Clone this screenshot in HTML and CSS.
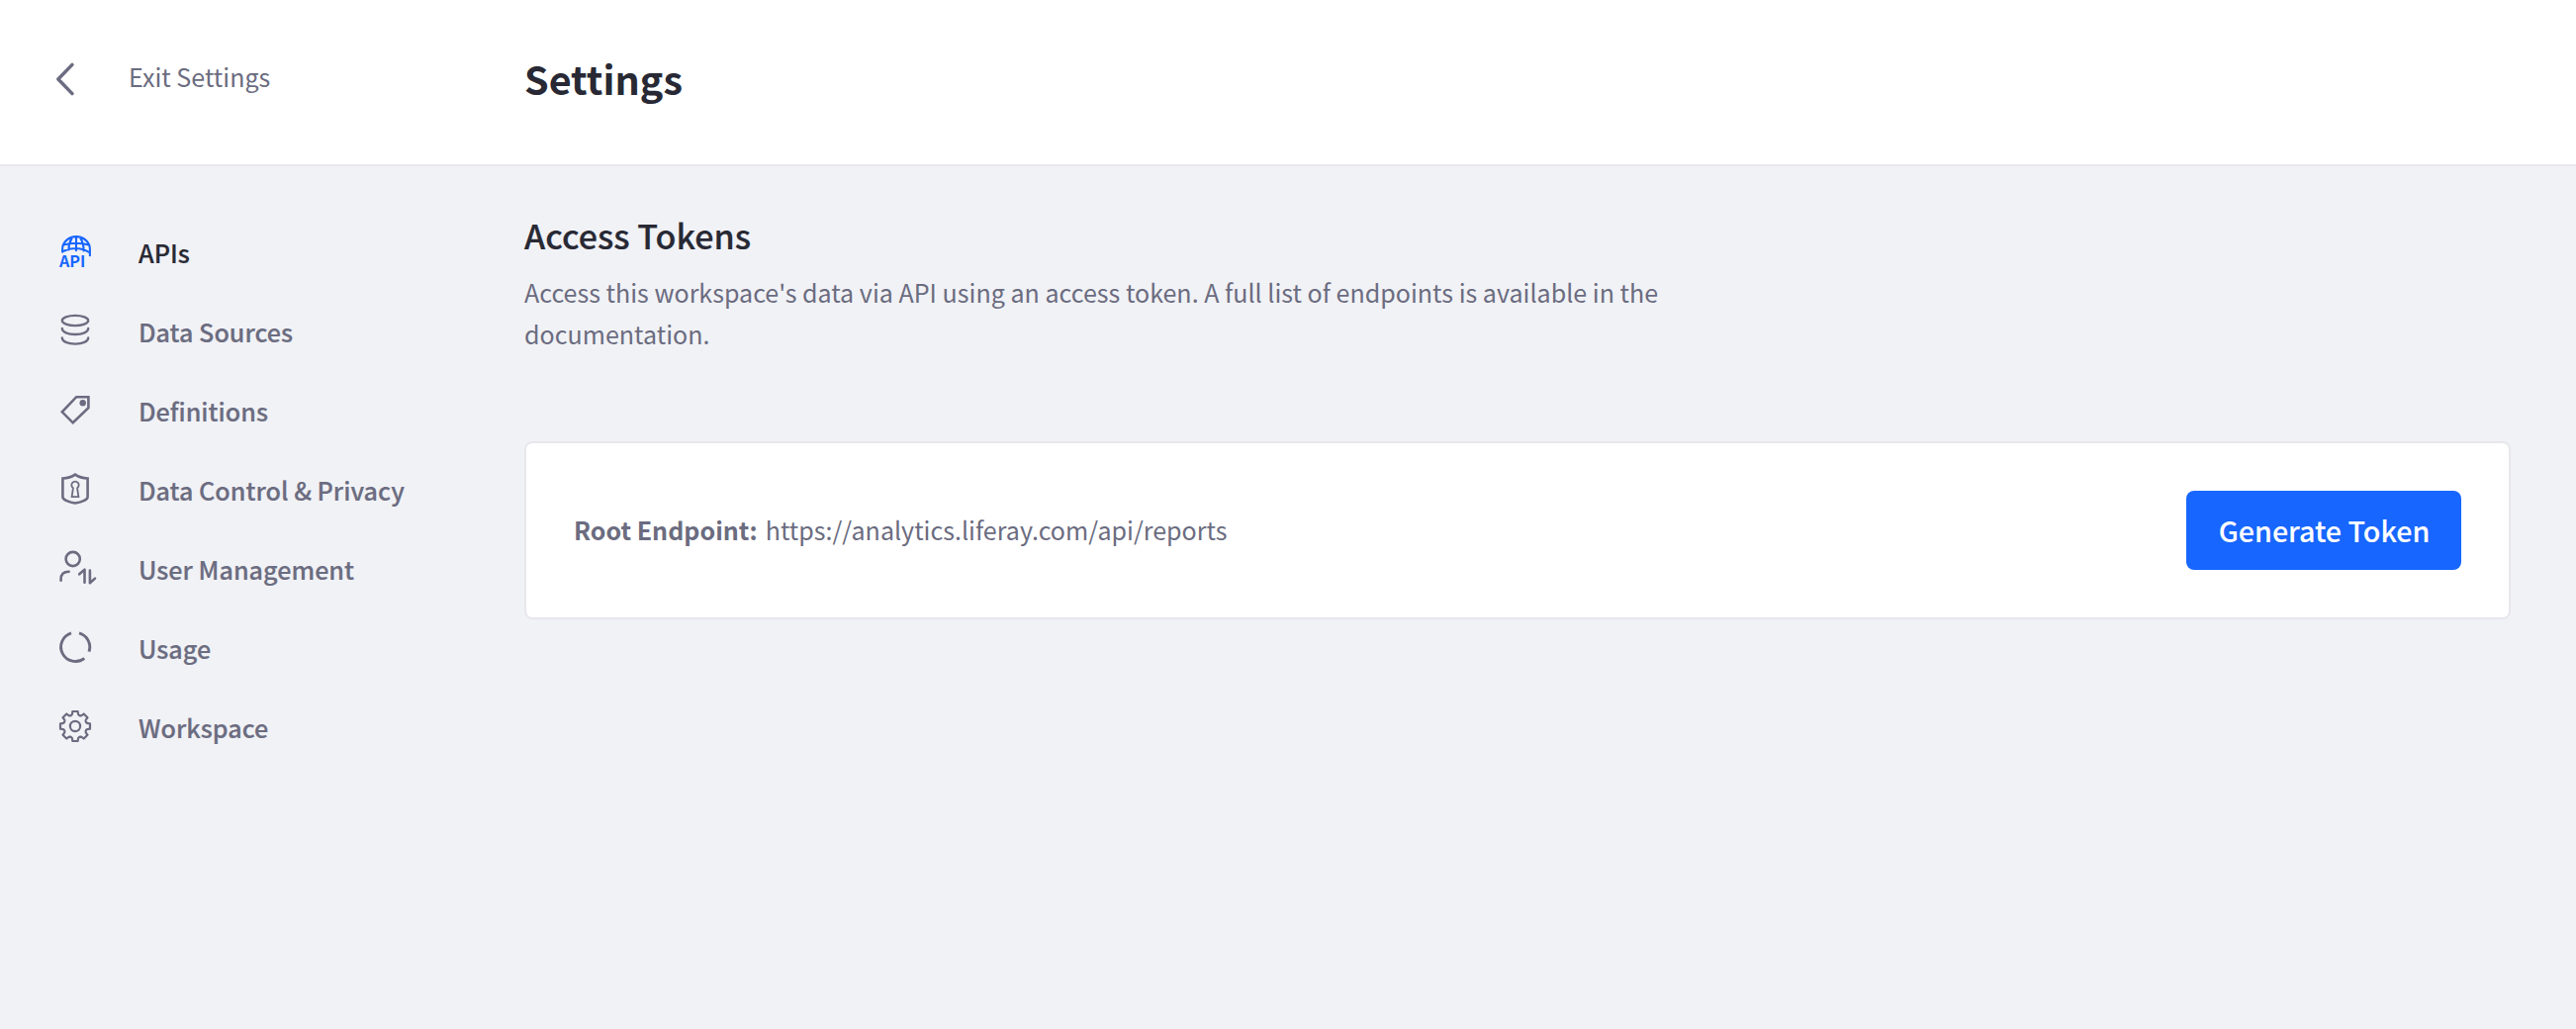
FILE: index.html
```html
<!DOCTYPE html>
<html lang="en">
<head>
<meta charset="utf-8">
<title>Settings</title>
<link rel="stylesheet" href="styles.css">
</head>
<body>
<header class="header">
  <a class="exit">
    <svg class="exit-icon" viewBox="0 0 20 34"><path d="M17 2.4 2.8 17 17 31.6"/></svg>
    <span>Exit Settings</span>
  </a>
  <h1 class="title">Settings</h1>
</header>
<div class="layout">
  <nav class="sidebar">
    <a class="item active">
      <svg class="icon" viewBox="0 0 32 32" stroke-width="2.1">
        <path d="M3.1 16.8V14A13.9 12.9 0 0 1 30.9 14V20.3M3.1 16.3Q17 9.3 30.9 17.3M4.2 9.6Q17 5.8 29.8 9.6M17 1.2V15.2M12.8 2.4Q9.4 8 9.4 14.4M21.2 2.4Q24.6 8 24.6 15.4"/>
        <text class="icon-text" x="0" y="32" textLength="26.4" lengthAdjust="spacingAndGlyphs">API</text>
      </svg>
      <span>APIs</span>
    </a>
    <a class="item">
      <svg class="icon" viewBox="0 0 32 32" stroke-width="2.3">
        <ellipse cx="16" cy="6" rx="13.2" ry="5.1"/>
        <path d="M2.8 14C2.8 17.6 8.5 20 16 20S29.2 17.6 29.2 14M2.8 23.4C2.8 27.1 8.5 29.6 16 29.6S29.2 27.1 29.2 23.4"/>
      </svg>
      <span>Data Sources</span>
    </a>
    <a class="item">
      <svg class="icon sharp" viewBox="0 0 32 32" stroke-width="2.6">
        <path d="M17.2 3.2H29.4V14.2L13.7 29.3 2.8 18.3Z"/>
        <circle class="solid" cx="23.7" cy="9.3" r="3.2"/>
      </svg>
      <span>Definitions</span>
    </a>
    <a class="item">
      <svg class="icon sharp" viewBox="0 0 32 32" stroke-width="2.6">
        <path d="M16 1.6C12 4.4 8 5.3 3.4 5.5V24.2C3.4 27 10 29.7 16 30.5 22 29.7 28.6 27 28.6 24.2V5.5C24 5.3 20 4.4 16 1.6Z"/>
        <path stroke-width="1.8" d="M13.9 15.3A3.7 3.7 0 1 1 18.1 15.3L19.4 24.2H12.6Z"/>
      </svg>
      <span>Data Control &amp; Privacy</span>
    </a>
    <a class="item">
      <svg class="icon" viewBox="0 0 32 32" stroke-width="2.6">
        <circle cx="13.7" cy="7" r="7.1"/>
        <path d="M1.6 28.8V27.5C1.6 22 4.6 19.8 9.6 19.8M20.2 22.3 25.5 17.6V30.8M30.9 18.6V31.2L36 26.6"/>
      </svg>
      <span>User Management</span>
    </a>
    <a class="item">
      <svg class="icon butt" viewBox="0 0 32 32" stroke-width="2.9">
        <path d="M20 1.9A14.6 14.6 0 0 1 30 20.6M25.3 27.3A14.6 14.6 0 1 1 12 1.9"/>
      </svg>
      <span>Usage</span>
    </a>
    <a class="item">
      <svg class="icon" viewBox="0 0 32 32" stroke-width="2.2">
        <circle cx="16" cy="16" r="5.1"/>
        <path d="M12.1 4.9Q13 4.4 13.1 3L13.3 1H18.7L18.9 3Q19 4.4 19.9 4.9L21.2 5.4Q22.2 5.6 23.2 4.7L24.7 3.5 28.5 7.3 27.3 8.8Q26.4 9.8 26.6 10.8L27.1 12.1Q27.6 13 29 13.1L31 13.3V18.7L29 18.9Q27.6 19 27.1 19.9L26.6 21.2Q26.4 22.2 27.3 23.2L28.5 24.7 24.7 28.5 23.2 27.3Q22.2 26.4 21.2 26.6L19.9 27.1Q19 27.6 18.9 29L18.7 31H13.3L13.1 29Q13 27.6 12.1 27.1L10.8 26.6Q9.8 26.4 8.8 27.3L7.3 28.5 3.5 24.7 4.7 23.2Q5.6 22.2 5.4 21.2L4.9 19.9Q4.4 19 3 18.9L1 18.7V13.3L3 13.1Q4.4 13 4.9 12.1L5.4 10.8Q5.6 9.8 4.7 8.8L3.5 7.3 7.3 3.5 8.8 4.7Q9.8 5.6 10.8 5.4Z"/>
      </svg>
      <span>Workspace</span>
    </a>
  </nav>
  <main class="content">
    <h2 class="heading">Access Tokens</h2>
    <p class="description">Access this workspace's data via API using an access token. A full list of endpoints is available in the documentation.</p>
    <section class="card">
      <div class="endpoint"><strong>Root Endpoint:</strong><span>https://analytics.liferay.com/api/reports</span></div>
      <button class="button">Generate Token</button>
    </section>
  </main>
</div>
</body>
</html>
```
FILE: styles.css
```css
* { box-sizing: border-box; }

body {
  margin: 0;
  min-height: 1040px;
  background: #f1f2f6;
  color: #6b6c80;
  font-family: "Noto Sans CJK SC", "Noto Sans", sans-serif;
  font-size: 25.07px;
  line-height: 42px;
}

h1, h2, p { margin: 0; }

svg {
  flex: none;
  overflow: visible;
  fill: none;
  stroke: currentColor;
  stroke-linecap: round;
  stroke-linejoin: round;
}

.header {
  display: flex;
  height: 168px;
  background: #fff;
  border-bottom: 2px solid #e7e7ed;
}

.exit {
  display: flex;
  align-items: center;
  gap: 54px;
  width: 530px;
  height: 42px;
  margin-top: 56px;
  padding-left: 56px;
}

.exit-icon {
  width: 20px;
  height: 34px;
  margin-top: 5px;
  stroke-width: 3.5;
}

.title {
  margin-top: 49px;
  color: #282934;
  font-size: 39.5px;
  font-weight: 700;
  line-height: 60px;
}

.layout { display: flex; }

.sidebar {
  display: flex;
  flex-direction: column;
  width: 530px;
  padding: 47px 0 0 60px;
}

.item {
  display: flex;
  align-items: center;
  gap: 48px;
  height: 80px;
  font-size: 25.16px;
  font-weight: 500;
  -webkit-text-stroke: 0.2px currentColor;
}

.active { color: #282934; }
.active .icon { color: #1766ff; }

.icon {
  width: 32px;
  height: 32px;
  margin-top: -2px;
}

.sharp { stroke-linejoin: miter; }
.butt { stroke-linecap: butt; }
.solid { fill: currentColor; stroke: none; }

.icon-text {
  fill: currentColor;
  stroke: none;
  font-size: 16px;
  font-weight: 700;
}

.content {
  flex: 1;
  padding: 46px 66px 0 0;
}

.heading {
  color: #282934;
  font-size: 34.1px;
  font-weight: 500;
  line-height: 46px;
  -webkit-text-stroke: 0.2px currentColor;
}

.description {
  max-width: 1200px;
  margin-top: 14px;
}

.card {
  display: flex;
  align-items: center;
  justify-content: space-between;
  height: 180px;
  margin-top: 88px;
  padding: 0 48px;
  background: #fff;
  border: 2px solid #e7e7ed;
  border-radius: 8px;
}

.endpoint {
  display: flex;
  gap: 8px;
  padding-bottom: 2px;
}

.button {
  width: 278px;
  height: 80px;
  padding: 0 0 1px 1px;
  border: 0;
  border-radius: 8px;
  background: #1766ff;
  color: #fff;
  font-family: inherit;
  font-size: 28.65px;
  font-weight: 500;
  line-height: 48px;
  -webkit-text-stroke: 0.1px currentColor;
}
```
